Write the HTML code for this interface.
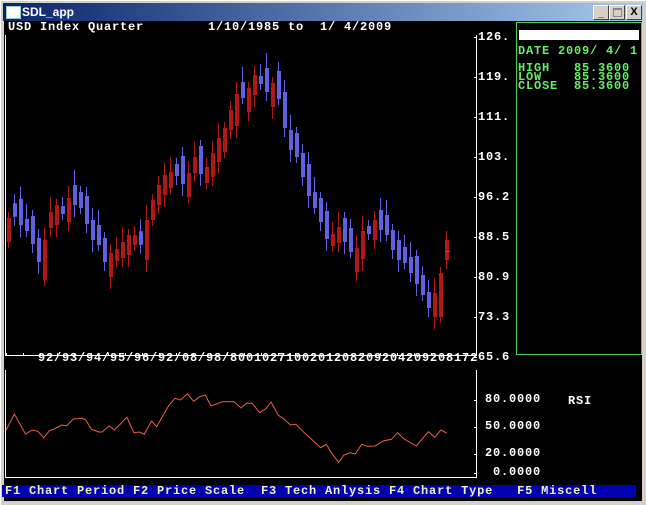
<!DOCTYPE html>
<html><head><style>
body{margin:0;width:646px;height:505px;overflow:hidden;background:#d4d0c8;position:relative;font-family:"Liberation Mono",monospace;}
.t{position:absolute;font:bold 12px "Liberation Mono",monospace;letter-spacing:0.8px;white-space:pre;line-height:11px;}
</style></head><body>
<div style="position:absolute;left:0;top:0;width:646px;height:505px;background:#d4d0c8;border-top:1px solid #fff;border-left:1px solid #fff;box-sizing:border-box;"></div>
<div style="position:absolute;left:3px;top:3px;width:640px;height:18px;background:linear-gradient(90deg,#0a246a,#a6caf0);"></div>
<div style="position:absolute;left:6px;top:6px;width:13px;height:11px;background:#fff;border:1px solid #9cb;"></div>
<div style="position:absolute;left:22px;top:5px;color:#fff;font:bold 12px 'Liberation Sans',sans-serif;">SDL_app</div>
<div style="position:absolute;left:593px;top:5px;width:14px;height:13px;background:#d4d0c8;border:1px solid;border-color:#fff #404040 #404040 #fff;font:bold 10px sans-serif;text-align:center;line-height:16px;">_</div>
<div style="position:absolute;left:609px;top:5px;width:14px;height:13px;background:#d4d0c8;border:1px solid;border-color:#fff #404040 #404040 #fff;"><div style="position:absolute;left:3px;top:2px;width:7px;height:6px;border:1px solid #888;border-top-width:2px;"></div></div>
<div style="position:absolute;left:626px;top:5px;width:14px;height:13px;background:#d4d0c8;border:1px solid;border-color:#fff #404040 #404040 #fff;font:bold 11px sans-serif;text-align:center;line-height:13px;">X</div>
<div style="position:absolute;left:4px;top:21px;width:638px;height:480px;background:#000;"></div>
<svg id="s" width="646" height="505" style="position:absolute;left:0;top:0" xmlns="http://www.w3.org/2000/svg"></svg>
<div class="t" style="left:8px;top:22px;color:#fff;">USD Index Quarter        1/10/1985 to  1/ 4/2009</div>
<div style="position:absolute;left:516px;top:22px;width:124px;height:331px;border:1px solid #5c5;"></div>
<div style="position:absolute;left:519px;top:30px;width:120px;height:10px;background:#fff;"></div>
<div class="t" style="left:518px;top:46px;color:#6e6;">DATE 2009/ 4/ 1</div>
<div class="t" style="left:518px;top:64px;color:#6e6;line-height:9px;">HIGH   85.3600
LOW    85.3600
CLOSE  85.3600</div>
<div class="t" style="left:478px;top:32px;color:#fff;">126.</div>
<div class="t" style="left:478px;top:72px;color:#fff;">119.</div>
<div class="t" style="left:478px;top:112px;color:#fff;">111.</div>
<div class="t" style="left:478px;top:152px;color:#fff;">103.</div>
<div class="t" style="left:478px;top:192px;color:#fff;">96.2</div>
<div class="t" style="left:478px;top:232px;color:#fff;">88.5</div>
<div class="t" style="left:478px;top:272px;color:#fff;">80.9</div>
<div class="t" style="left:478px;top:312px;color:#fff;">73.3</div>
<div class="t" style="left:478px;top:352px;color:#fff;">65.6</div>
<div class="t" style="left:38px;top:353px;color:#fff;">92/93/94/95/96/92/08/98/8001027100201208209204209208172</div>
<div class="t" style="left:485px;top:394px;color:#fff;">80.0000</div>
<div class="t" style="left:485px;top:421px;color:#fff;">50.0000</div>
<div class="t" style="left:485px;top:448px;color:#fff;">20.0000</div>
<div class="t" style="left:493px;top:467px;color:#fff;">0.0000</div>
<div class="t" style="left:568px;top:396px;color:#fff;">RSI</div>
<div style="position:absolute;left:2px;top:485px;width:634px;height:12px;background:#0000b0;"></div>
<div class="t" style="left:5px;top:486px;color:#f0f0c0;">F1 Chart Period F2 Price Scale  F3 Tech Anlysis F4 Chart Type   F5 Miscell</div>
<script>
var s=document.getElementById('s'),h='';
function L(x1,y1,x2,y2,c,w){h+='<line x1="'+x1+'" y1="'+y1+'" x2="'+x2+'" y2="'+y2+'" stroke="'+c+'" stroke-width="'+(w||1)+'"/>';}
L(5.5,35,5.5,356,'#fff');L(5,355.5,477,355.5,'#fff');L(476.5,35,476.5,356,'#fff');
for(var i=0;i<9;i++){var yy=37.5+i*40;L(474,yy,477,yy,'#fff');}
for(var x0=6;x0<476;x0+=17)L(x0+.5,353,x0+.5,356,'#fff');
L(5.5,370,5.5,478,'#fff');L(5,477.5,477,477.5,'#fff');L(476.5,370,476.5,478,'#fff');
[400,427,454,473].forEach(function(q){L(474,q+.5,477,q+.5,'#fff');});
var ys=[230,210,212,225,230,250,260,220,215,210,210,195,200,210,230,235,250,265,255,250,245,240,238,240,210,195,185,180,170,170,185,165,160,175,165,150,140,120,110,90,100,85,80,80,95,85,110,140,145,165,180,200,210,225,240,235,230,240,260,245,230,230,220,225,240,250,255,265,270,285,300,305,295,250];
for(var i=0;i<ys.length;i++){var cx=7+i*6,cy=ys[i],nn=(i+1<ys.length)?ys[i+1]:cy-10,up=nn<cy;
var c=up?'#b01818':'#6060e0';var bh=8+Math.abs(nn-cy)*0.8+(i%3)*4;var tp=cy-bh/2;
L(cx+1.5,tp-6-(i%4)*3,cx+1.5,tp+bh+6+(i%3)*3,c,1);
h+='<rect x="'+cx+'" y="'+tp+'" width="4" height="'+bh+'" fill="'+c+'"/>';}
var p=[[15,270],[35,222],[62,282],[78,270],[92,274],[106,294],[120,272],[130,268],[150,255],[162,257],[178,237],[200,235],[208,240],[222,268],[240,276],[248,276],[265,258],[278,270],[308,232],[325,278],[338,276],[350,283],[368,243],[380,260],[410,196],[425,175],[438,180],[455,162],[470,184],[485,170],[498,165],[512,198],[540,185],[568,185],[585,204],[598,190],[612,190],[630,218],[645,206],[658,186],[675,225],[690,238],[705,255],[718,253],[740,280],[760,302],[778,323],[792,313],[805,340],[822,367],[835,345],[850,338],[862,342],[878,313],[892,319],[910,318],[930,303],[950,298],[965,278],[980,296],[1010,318],[1040,275],[1055,292],[1070,270],[1085,280]];
h+='<polyline fill="none" stroke="#e86048" stroke-width="1" points="'+p.map(function(q){return (q[0]/2.427).toFixed(1)+','+(q[1]/3+340).toFixed(1);}).join(' ')+'"/>';
L(446,251.5,450,251.5,'#6060e0');
s.innerHTML=h;
</script>
</body></html>
